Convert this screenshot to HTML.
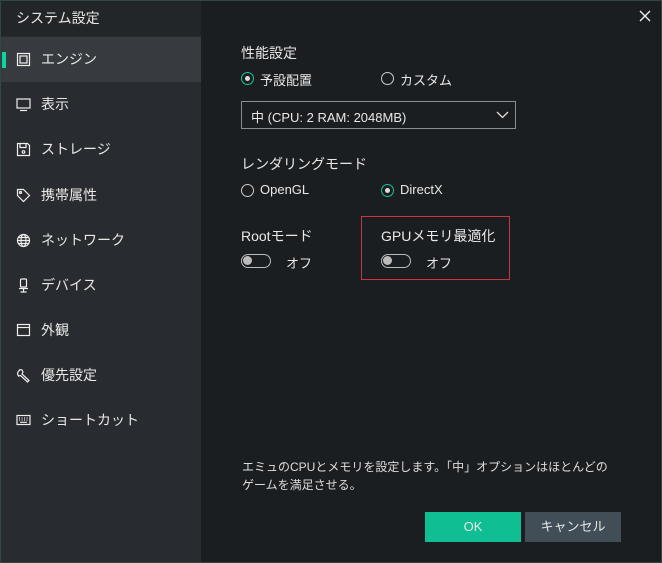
<!DOCTYPE html><html><head><meta charset="utf-8"><style>
*{margin:0;padding:0;box-sizing:border-box}
body{width:662px;height:563px;background:#1b1e21;font-family:"Liberation Sans","Noto Sans CJK JP",sans-serif;color:#e8e8e8;position:relative;overflow:hidden;font-size:13px}
.frame{position:absolute;inset:0;border:1px solid #2e4842;pointer-events:none;z-index:9}
.side{position:absolute;left:0;top:0;width:201px;height:563px;background:#282b2f}
.title{position:absolute;left:0;top:0;width:201px;height:36px;background:#232629;font-size:14px;line-height:36px;padding-left:16px}
.item{position:absolute;left:0;width:201px;height:45px;font-size:14px;line-height:45px;padding-left:41px}
.item.act{background:#373b3f}
.item.act:before{content:"";position:absolute;left:2px;top:15px;width:4px;height:16px;background:#10d1a0}
.item svg{position:absolute;left:16px;top:15px}
.t{position:absolute;white-space:nowrap}
.radio{position:absolute;width:13px;height:13px;border:1.3px solid #ccc;border-radius:50%}
.radio.on{border-color:#19c39a}
.radio.on:after{content:"";position:absolute;left:2.5px;top:2.5px;width:5px;height:5px;border-radius:50%;background:#ddd}
.tog{position:absolute;width:30px;height:14px;border:1.3px solid #bbb;border-radius:8px}
.tog:after{content:"";position:absolute;left:1px;top:1px;width:9px;height:9px;border-radius:50%;background:#bbb}
</style></head><body>
<div class="side">
<div class="title">システム設定</div>
<div class="item act" style="top:37px"><svg width="15" height="15" viewBox="0 0 15 15" fill="none" stroke="#eee" stroke-width="1.2"><rect x="1.5" y="1.5" width="12" height="12"/><rect x="4" y="4" width="7" height="7"/></svg>エンジン</div>
<div class="item" style="top:82px"><svg width="15" height="15" viewBox="0 0 15 15" fill="none" stroke="#eee" stroke-width="1.2"><rect x="1" y="2" width="13" height="9"/><path d="M4 13.5h7"/></svg>表示</div>
<div class="item" style="top:127px"><svg width="15" height="15" viewBox="0 0 15 15" fill="none" stroke="#eee" stroke-width="1.2"><path d="M1.5 1.5h10l2 2v10h-12z"/><path d="M4 1.5v4h6v-4"/><circle cx="7.5" cy="10" r="1.3"/></svg>ストレージ</div>
<div class="item" style="top:173px"><svg width="15" height="15" viewBox="0 0 15 15" fill="none" stroke="#eee" stroke-width="1.2"><path d="M1.5 1.5h6l6 6-6 6-6-6z"/><circle cx="4.5" cy="4.5" r="1"/></svg>携帯属性</div>
<div class="item" style="top:218px"><svg width="15" height="15" viewBox="0 0 15 15" fill="none" stroke="#eee" stroke-width="1.2"><circle cx="7.5" cy="7.5" r="6"/><ellipse cx="7.5" cy="7.5" rx="2.5" ry="6"/><path d="M1.5 7.5h12M2.5 4.5h10M2.5 10.5h10"/></svg>ネットワーク</div>
<div class="item" style="top:263px"><svg width="15" height="15" viewBox="0 0 15 15" fill="none" stroke="#eee" stroke-width="1.2"><rect x="4.5" y="1" width="6" height="8" rx="1"/><path d="M3 10.5h9M7.5 10.5v3M4.5 14h6"/></svg>デバイス</div>
<div class="item" style="top:308px"><svg width="15" height="15" viewBox="0 0 15 15" fill="none" stroke="#eee" stroke-width="1.2"><rect x="1.5" y="1.5" width="12" height="11"/><path d="M1.5 4.5h12"/></svg>外観</div>
<div class="item" style="top:353px"><svg width="15" height="15" viewBox="0 0 15 15" fill="none" stroke="#eee" stroke-width="1.2"><path d="M2 4l2-2.5 2 .5 1 2-1 2 7 6.5-1.5 1.5L4.5 7.5l-2 .5-1-2z"/></svg>優先設定</div>
<div class="item" style="top:398px"><svg width="15" height="15" viewBox="0 0 15 15" fill="none" stroke="#eee" stroke-width="1.2"><rect x="1" y="2.5" width="13" height="9"/><path d="M3 5h1M5.5 5h1M8 5h1M10.5 5h1M3 7h1M5.5 7h1M8 7h1M10.5 7h1M4 9.3h7"/></svg>ショートカット</div>
</div>
<svg style="position:absolute;left:639px;top:10px" width="12" height="12" viewBox="0 0 12 12" stroke="#eee" stroke-width="1.4"><path d="M1 1l10 10M11 1L1 11"/></svg>
<div class="t" style="left:241px;top:43px;font-size:14px">性能設定</div>
<div class="radio on" style="left:241px;top:72px"></div><div class="t" style="left:260px;top:70px">予設配置</div>
<div class="radio" style="left:381px;top:72px"></div><div class="t" style="left:400px;top:70px">カスタム</div>
<div style="position:absolute;left:241px;top:101px;width:275px;height:28px;border:1px solid #8a8d90"></div>
<div class="t" style="left:251px;top:107px">中 (CPU: 2 RAM: 2048MB)</div>
<svg style="position:absolute;left:496px;top:111px" width="13" height="8" viewBox="0 0 13 8" fill="none" stroke="#ddd" stroke-width="1.3"><path d="M1 1l5.5 5.5L12 1"/></svg>
<div class="t" style="left:241px;top:154px;font-size:14px">レンダリングモード</div>
<div class="radio" style="left:241px;top:184px"></div><div class="t" style="left:260px;top:182px">OpenGL</div>
<div class="radio on" style="left:381px;top:184px"></div><div class="t" style="left:400px;top:182px">DirectX</div>
<div class="t" style="left:241px;top:226px;font-size:14px">Rootモード</div>
<div class="tog" style="left:241px;top:254px"></div><div class="t" style="left:286px;top:253px">オフ</div>
<div style="position:absolute;left:361px;top:216px;width:149px;height:64px;border:1px solid #c9363f"></div>
<div class="t" style="left:381px;top:226px;font-size:14px">GPUメモリ最適化</div>
<div class="tog" style="left:381px;top:254px"></div><div class="t" style="left:426px;top:253px">オフ</div>
<div class="t" style="left:242px;top:458px;font-size:12px;line-height:18px;color:#ddd">エミュのCPUとメモリを設定します。「中」オプションはほとんどの<br>ゲームを満足させる。</div>
<div style="position:absolute;left:425px;top:512px;width:96px;height:30px;background:#0fbf93;font-size:13px;line-height:30px;text-align:center">OK</div>
<div style="position:absolute;left:525px;top:512px;width:96px;height:30px;background:#414d57;font-size:13px;line-height:30px;text-align:center">キャンセル</div>
<div class="frame"></div>
</body></html>
